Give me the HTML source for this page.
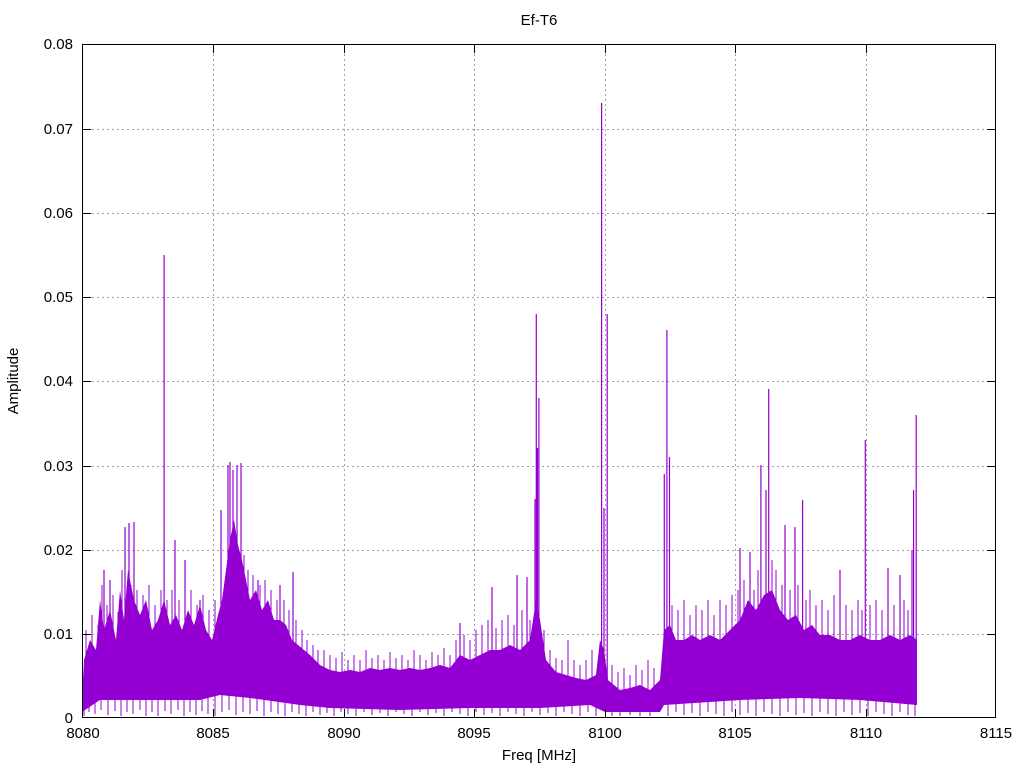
<!DOCTYPE html>
<html><head><meta charset="utf-8"><style>
html,body{margin:0;padding:0;background:#fff;}
svg{display:block;font-family:"Liberation Sans",Arial,sans-serif;}
</style></head><body>
<svg width="1024" height="768" viewBox="0 0 1024 768" xmlns="http://www.w3.org/2000/svg">
<rect width="1024" height="768" fill="#fff"/>
<g stroke="#a0a0a0" stroke-width="1" stroke-dasharray="2,3" fill="none">
<path d="M213.5 44V718M344.5 44V718M474.5 44V718M605.5 44V718M735.5 44V718M866.5 44V718"/>
<path d="M82 634.5H996M82 550.5H996M82 466.5H996M82 381.5H996M82 297.5H996M82 213.5H996M82 129.5H996"/>
</g>
<polygon fill="#9400d3" points="82,700 84,660 90,640 96,650 100,600 104,630 110,610 116,640 120,590 124,620 128,570 134,600 140,615 146,600 152,630 158,620 164,600 170,625 176,615 182,630 188,610 194,625 200,605 206,630 212,640 218,615 222,600 226,570 230,540 234,520 238,545 242,560 246,580 250,600 256,590 262,610 268,600 274,620 280,620 286,625 292,640 298,645 304,650 310,655 320,665 330,670 340,672 350,670 360,672 370,668 380,670 390,668 400,670 410,668 420,670 430,668 440,665 450,668 460,655 470,660 480,655 490,650 500,650 510,645 520,650 530,640 536,600 540,620 546,660 556,672 566,675 576,678 586,680 596,675 600,640 604,650 608,680 620,690 630,688 640,685 650,690 660,680 664,630 670,625 676,640 684,640 692,635 700,640 710,635 720,640 730,630 740,620 748,600 756,610 764,595 772,590 780,610 788,620 796,615 804,630 812,625 820,635 830,635 840,640 850,640 860,635 870,640 880,640 890,635 900,640 910,635 917,640 917,705 860,700 800,698 740,700 664,705 660,712 605,712 590,705 540,708 470,708 400,710 330,708 300,705 250,698 220,695 200,700 150,700 100,700 82,712"/>
<path fill="none" stroke="#9400d3" stroke-width="1.2" d="M164.1 255V690M536.3 314V690M538.9 398V690M535 499V690M537.5 448V690M601.6 103V700M607.2 314V700M604 508V700M666.9 330V700M669.5 457V700M664.3 474V700M768.7 389V690M760.9 465V690M766 490V690M802.6 500V690M865.3 440V690M916.2 415V700M913.6 490V700M228 465V690M230 462V690M233 470V690M237 465V690M241 463V690M221 510V690M129 523V690M134 522V690M125 527V690M293 572V690M517 575V690M527 577V690M492 587V690M460 623V690M785 525V690M795 527V690M740 548V690M750 552V690M840 570V690M888 568V690M912 550V690M900 575V690M200 600V690M175 540V690M185 560V690M110 580V690M104 570V690M280 585V690M258 580V690"/>
<path fill="none" stroke="#9400d3" stroke-width="1" d="M86 630V680M92 615V680M98 625V680M102 585V680M107 605V680M113 595V680M118 612V680M122 570V680M131 585V680M137 590V680M143 595V680M149 585V680M155 605V680M161 590V680M167 600V680M172 590V680M179 600V680M191 590V680M197 605V680M203 595V680M209 610V680M215 600V680M244 555V680M248 570V680M253 575V680M260 585V680M265 580V680M271 590V680M277 600V680M284 600V680M289 610V680M296 620V680M302 630V680M307 640V680M313 645V680M318 650V690M324 650V690M330 655V690M336 658V690M342 652V690M348 660V690M354 655V690M360 660V690M366 650V690M372 658V690M378 655V690M384 660V690M390 652V690M396 658V690M402 655V690M408 660V690M414 650V690M420 655V690M426 660V690M432 652V690M438 655V690M444 648V690M450 655V690M456 640V690M464 635V690M470 640V690M476 630V690M482 625V690M488 620V690M496 628V690M502 620V690M508 615V690M514 625V690M522 610V690M530 620V690M544 630V690M550 650V690M556 658V690M562 660V690M568 640V690M574 660V690M580 665V690M586 660V690M592 650V690M612 665V700M618 672V700M624 668V700M630 675V700M636 665V700M642 670V700M648 660V700M654 668V700M672 605V690M678 610V690M684 600V690M690 615V690M696 605V690M702 610V690M708 600V690M714 615V690M720 600V690M726 605V690M732 595V690M738 590V690M744 580V690M754 590V690M758 570V690M772 560V690M776 570V690M782 585V690M790 590V690M798 585V690M806 600V690M810 590V690M816 605V690M822 600V690M828 610V690M834 595V690M846 605V690M852 610V690M858 600V690M862 610V690M870 605V690M876 600V690M882 610V690M894 605V690M904 600V690M908 610V690"/>
<path fill="none" stroke="#9400d3" stroke-width="1" d="M84 690V716M89 690V712M95 690V714M101 690V710M108 690V715M115 690V711M121 690V716M127 690V712M133 690V714M140 690V710M146 690V716M152 690V712M158 690V716M165 690V711M171 690V714M178 690V710M184 690V716M190 690V712M196 690V715M202 690V711M208 690V714M215 690V716M222 690V712M229 690V710M236 690V715M243 690V712M250 690V714M257 690V711M264 690V716M271 690V712M278 690V714M285 690V716M292 690V712M299 690V714M306 695V716M313 695V712M320 695V715M327 695V713M334 695V716M341 695V712M348 695V714M356 695V716M364 695V712M372 695V715M380 695V713M388 695V716M396 695V712M404 695V714M412 695V716M420 695V712M428 695V715M436 695V713M444 695V716M452 695V712M460 695V714M468 695V716M476 695V712M484 695V715M492 695V713M500 695V716M508 695V712M516 695V714M524 695V716M532 695V712M540 695V715M548 695V713M556 695V716M564 695V712M572 695V714M580 695V716M588 695V712M596 695V716M612 700V716M620 700V716M630 700V715M640 700V716M650 700V716M668 690V716M676 690V712M684 690V715M692 690V713M700 690V716M708 690V712M716 690V714M724 690V716M732 690V712M740 690V715M748 690V713M756 690V716M764 690V712M772 690V714M780 690V716M788 690V712M796 690V715M804 690V713M812 690V716M820 690V712M828 690V714M836 690V716M844 690V712M852 690V715M860 690V713M868 690V716M876 690V712M884 690V714M892 690V716M900 690V712M908 690V715M915 690V716"/>
<g stroke="#000" stroke-width="1" fill="none">
<rect x="82.5" y="44.5" width="913" height="673"/>
<path d="M82 634.5h9M82 550.5h9M82 466.5h9M82 381.5h9M82 297.5h9M82 213.5h9M82 129.5h9M996 634.5h-9M996 550.5h-9M996 466.5h-9M996 381.5h-9M996 297.5h-9M996 213.5h-9M996 129.5h-9"/>
<path d="M213.5 718v-9M344.5 718v-9M474.5 718v-9M605.5 718v-9M735.5 718v-9M866.5 718v-9M213.5 44v9M344.5 44v9M474.5 44v9M605.5 44v9M735.5 44v9M866.5 44v9"/>
</g>
<g font-size="15" fill="#000" text-anchor="end">
<text x="73" y="723">0</text><text x="73" y="639">0.01</text><text x="73" y="555">0.02</text><text x="73" y="471">0.03</text><text x="73" y="386">0.04</text><text x="73" y="302">0.05</text><text x="73" y="218">0.06</text><text x="73" y="134">0.07</text><text x="73" y="49">0.08</text>
</g>
<g font-size="15" fill="#000" text-anchor="middle">
<text x="83" y="738">8080</text><text x="213" y="738">8085</text><text x="344" y="738">8090</text><text x="474" y="738">8095</text><text x="605" y="738">8100</text><text x="735" y="738">8105</text><text x="866" y="738">8110</text><text x="996" y="738">8115</text>
<text x="539" y="760">Freq [MHz]</text>
<text x="539" y="25">Ef-T6</text>
<text transform="translate(18,381) rotate(-90)">Amplitude</text>
</g>
</svg>
</body></html>
